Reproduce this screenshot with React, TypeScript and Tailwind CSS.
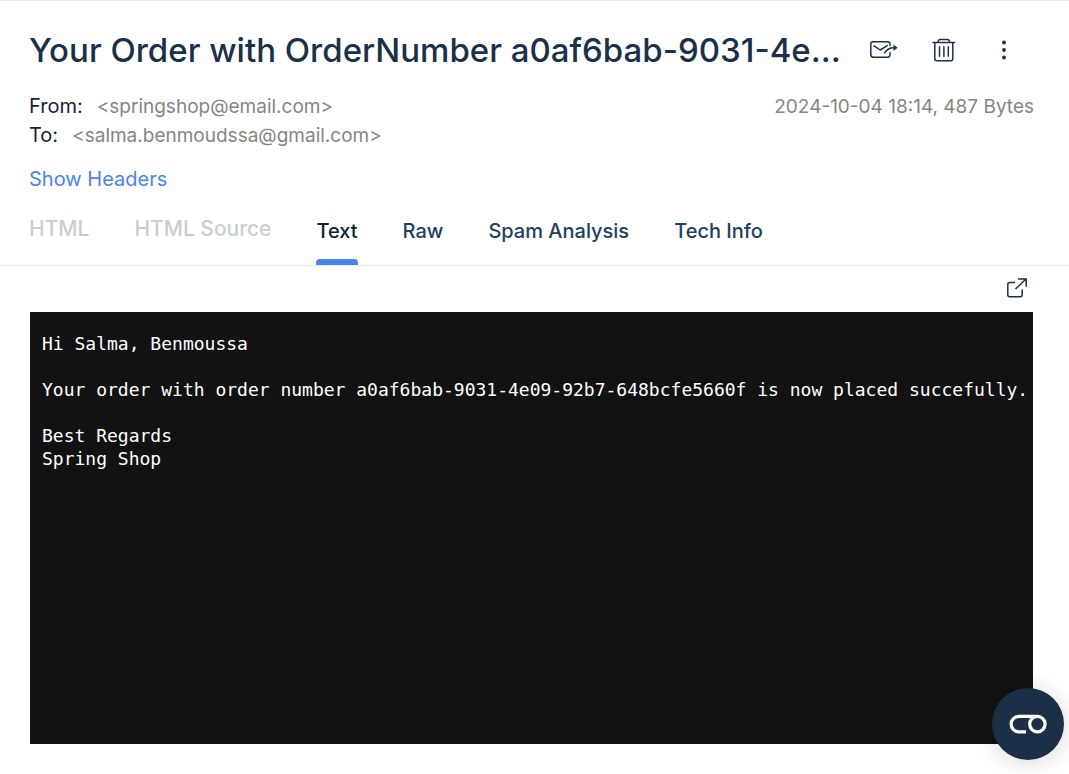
import { useState } from "react";

const tabs = [
  { label: "HTML", disabled: true },
  { label: "HTML Source", disabled: true },
  { label: "Text" },
  { label: "Raw" },
  { label: "Spam Analysis" },
  { label: "Tech Info" },
];

const body = `Hi Salma, Benmoussa

Your order with order number a0af6bab-9031-4e09-92b7-648bcfe5660f is now placed succefully.

Best Regards
Spring Shop`;

function ForwardIcon() {
  return (
    <svg width="28" height="18" viewBox="0 0 28 18" fill="none" stroke="currentColor" strokeWidth="1.5" strokeLinecap="round" aria-hidden="true">
      <path d="M20 4.5V3.2A2.4 2.4 0 0 0 17.6.8H3.2A2.4 2.4 0 0 0 .8 3.2v10.6a2.4 2.4 0 0 0 2.4 2.4h14.4a2.4 2.4 0 0 0 2.4-2.4v-2" />
      <path d="M4 4.8 10.2 9l7-4.4" strokeLinejoin="round" />
      <path d="M14.6 11.8C16.8 8.5 19.5 6.8 23.5 6.8" />
      <path d="M23.5 3.6 27.6 6.8 23.5 10Z" fill="currentColor" stroke="none" />
    </svg>
  );
}

function TrashIcon() {
  return (
    <svg width="24" height="24" viewBox="0 0 24 24" fill="none" stroke="currentColor" strokeWidth="1.5" strokeLinecap="round" aria-hidden="true">
      <path d="M1 4.5h21.5M2.8 4.5v16.3a2 2 0 0 0 2 2h14a2 2 0 0 0 2-2V4.5M5.8 4.2l.5-1.4A1.8 1.8 0 0 1 8 1.5h7.6a1.8 1.8 0 0 1 1.7 1.3l.5 1.4" />
      <path d="M7.5 8.8v9.4M11.9 8.8v9.4M16.3 8.8v9.4" />
    </svg>
  );
}

function DotsIcon() {
  return (
    <svg width="4" height="20" viewBox="0 0 4 20" fill="currentColor" aria-hidden="true">
      <circle cx="2" cy="2.5" r="1.9" />
      <circle cx="2" cy="10" r="1.9" />
      <circle cx="2" cy="17.5" r="1.9" />
    </svg>
  );
}

function OpenIcon() {
  return (
    <svg width="20" height="20" viewBox="0 0 20 20" fill="none" stroke="currentColor" strokeWidth="1.5" aria-hidden="true">
      <path d="M8 4.5H2.8a2 2 0 0 0-2 2v10.2a2 2 0 0 0 2 2h10.4a2 2 0 0 0 2-2V11.5" />
      <path d="M8.5 11 19 1M11 .9h8.2v7.8" />
    </svg>
  );
}

function ChatLogo() {
  return (
    <svg width="38" height="20" viewBox="0 0 38 20" fill="none" stroke="currentColor" strokeWidth="3.2" aria-hidden="true">
      <path d="M17 17.8H9.8A7.7 7.7 0 0 1 9.8 2.4h18" />
      <circle cx="28.4" cy="10.1" r="7.7" />
    </svg>
  );
}

export default function App() {
  const [active, setActive] = useState("Text");
  return (
    <main className="flex min-h-screen flex-col border-t border-[#ececec] bg-white font-['Inter',sans-serif] text-[#1b3049]">
      <header className="pt-[25px] pr-[35px] pl-[29px]">
        <div className="flex items-center">
          <h1 className="min-w-0 flex-1 truncate text-[33px] leading-[48px] font-medium">
            Your Order with OrderNumber a0af6bab-9031-4e09-92b7-648bcfe5660f
          </h1>
          <div className="flex items-center">
            <button aria-label="Forward email" className="flex h-12 w-[60px] items-center justify-center"><ForwardIcon /></button>
            <button aria-label="Delete email" className="flex h-12 w-[60px] items-center justify-center"><TrashIcon /></button>
            <button aria-label="More actions" className="flex h-12 w-[60px] items-center justify-center"><DotsIcon /></button>
          </div>
        </div>
        <div className="mt-[18px] flex justify-between text-[19px] leading-[29px] text-[#86867f]">
          <dl>
            <div className="flex gap-3.5">
              <dt className="text-[20px] text-[#13243a]">From:</dt>
              <dd>&lt;springshop@email.com&gt;</dd>
            </div>
            <div className="flex gap-3.5">
              <dt className="text-[20px] text-[#13243a]">To:</dt>
              <dd>&lt;salma.benmoudssa@gmail.com&gt;</dd>
            </div>
          </dl>
          <p>2024-10-04 18:14, 487 Bytes</p>
        </div>
        <a href="#headers" className="mt-3.5 inline-block text-[20px] leading-[30px] text-[#4c83ee]">Show Headers</a>
      </header>

      <div role="tablist" className="flex gap-[45px] border-b border-[#ebebeb] pl-[29px]">
        {tabs.map(({ label, disabled }) => {
          const selected = label === active;
          return (
            <button
              key={label}
              role="tab"
              aria-selected={selected}
              disabled={disabled}
              onClick={() => setActive(label)}
              className={
                disabled
                  ? "pt-[23px] pb-6 text-[21px] leading-6 font-medium text-[#c8cdd3]"
                  : selected
                    ? "flex flex-col items-center justify-between pt-[25px] text-[20px] leading-6 font-medium text-[#0f2138]"
                    : "flex flex-col items-center justify-between pt-[25px] text-[20px] leading-6 font-medium text-[#21405c]"
              }
            >
              {label}
              {selected && <span className="h-1.5 w-full rounded-t bg-[#4c83ee]" />}
            </button>
          );
        })}
      </div>

      <section className="flex flex-1 flex-col pr-9 pb-[30px] pl-[30px]">
        <button aria-label="Open in new window" className="mr-1.5 flex h-[46px] items-center self-end pb-0.5"><OpenIcon /></button>
        <pre className="flex-1 overflow-auto bg-[#121212] py-5 pl-3 font-['DejaVu_Sans_Mono',monospace] text-[18px] leading-[23px] text-white">
          {body}
        </pre>
      </section>

      <button
        aria-label="Open chat"
        className="fixed right-[5px] bottom-3.5 flex size-[72px] items-center justify-center rounded-full bg-[#1b3047] text-white shadow-[0_2px_24px_rgba(0,0,0,0.16)]"
      >
        <ChatLogo />
      </button>
    </main>
  );
}
